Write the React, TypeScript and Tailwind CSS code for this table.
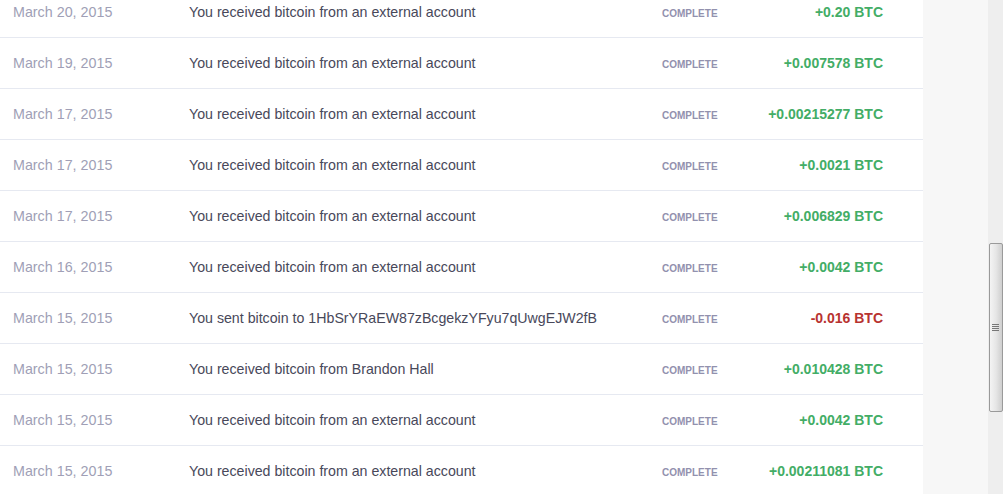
import React from "react";

type Tx = { date: string; text: string; amount: string; sent?: boolean };

const rows: Tx[] = [
  { date: "March 20, 2015", text: "You received bitcoin from an external account", amount: "+0.20 BTC" },
  { date: "March 19, 2015", text: "You received bitcoin from an external account", amount: "+0.007578 BTC" },
  { date: "March 17, 2015", text: "You received bitcoin from an external account", amount: "+0.00215277 BTC" },
  { date: "March 17, 2015", text: "You received bitcoin from an external account", amount: "+0.0021 BTC" },
  { date: "March 17, 2015", text: "You received bitcoin from an external account", amount: "+0.006829 BTC" },
  { date: "March 16, 2015", text: "You received bitcoin from an external account", amount: "+0.0042 BTC" },
  { date: "March 15, 2015", text: "You sent bitcoin to 1HbSrYRaEW87zBcgekzYFyu7qUwgEJW2fB", amount: "-0.016 BTC", sent: true },
  { date: "March 15, 2015", text: "You received bitcoin from Brandon Hall", amount: "+0.010428 BTC" },
  { date: "March 15, 2015", text: "You received bitcoin from an external account", amount: "+0.0042 BTC" },
  { date: "March 15, 2015", text: "You received bitcoin from an external account", amount: "+0.00211081 BTC" },
];

function Row({ tx }: { tx: Tx }) {
  return (
    <div className="flex items-center h-[51px] border-b border-[#e6e9f1] shrink-0">
      <div className="w-[189px] pl-[13px] pt-[2px] text-[14.3px] text-[#a09fb6]">{tx.date}</div>
      <div className="w-[473px] pt-[2px] text-[14.2px] text-[#48485a]">{tx.text}</div>
      <div className="w-[90px] text-[10px] font-bold text-[#9291ae] pt-[2px]">COMPLETE</div>
      <div
        className={
          "w-[131px] text-right text-[14px] font-bold " +
          (tx.sent ? "text-[#b83330]" : "text-[#43ad66]")
        }
      >
        {tx.amount}
      </div>
    </div>
  );
}

export default function App() {
  return (
    <div
      className="flex w-[1003px] h-[494px] overflow-hidden bg-white"
      style={{ fontFamily: '"Liberation Sans", Arial, sans-serif' }}
    >
      <div className="w-[923px] flex flex-col">
        <div className="-mt-[13px] flex flex-col">
          {rows.map((tx, i) => (
            <Row key={i} tx={tx} />
          ))}
        </div>
      </div>
      <div className="w-[65px] bg-[#f7f7f7]" />
      <div className="w-[15px] bg-[#eeeeee] flex flex-col">
        <div className="mt-[243px] h-[169px] mx-[0.5px] rounded-[2px] border border-[#9a9a9a] bg-gradient-to-r from-[#f4f4f4] via-[#e6e6e6] to-[#cfcfcf] flex items-center justify-center">
          <div className="flex flex-col gap-[1px]">
            <div className="w-[7px] h-[1px] bg-[#777]" />
            <div className="w-[7px] h-[1px] bg-[#777]" />
            <div className="w-[7px] h-[1px] bg-[#777]" />
            <div className="w-[7px] h-[1px] bg-[#777]" />
          </div>
        </div>
      </div>
    </div>
  );
}
